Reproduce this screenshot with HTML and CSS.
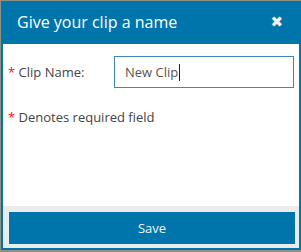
FILE: index.html
```html
<!DOCTYPE html>
<html>
<head>
<meta charset="utf-8">
<link rel="stylesheet" href="styles.css">
</head>
<body>
<div class="dialog">
  <div class="header">
    <span class="title">Give your clip a name</span>
    <span class="close">&#x2716;</span>
  </div>
  <div class="content">
    <div class="row">
      <label class="label"><span class="req">*</span> Clip Name:</label>
      <div class="input" role="textbox">New Clip<span class="caret"></span></div>
    </div>
    <div class="note"><span class="req">*</span> Denotes required field</div>
  </div>
  <div class="footer">
    <button class="save">Save</button>
  </div>
</div>
</body>
</html>
```
FILE: styles.css
```css
html, body {
  margin: 0;
  padding: 0;
}
body {
  background: #8f9085;
  width: 301px;
  height: 252px;
  overflow: hidden;
  font-family: "Open Sans", "Noto Sans", sans-serif;
}
.dialog {
  box-sizing: border-box;
  margin: 1px 0 0 1px;
  width: 300px;
  height: 249px;
  border: 2px solid #0075ab;
  display: flex;
  flex-direction: column;
  background: #fff;
}
.header {
  height: 41px;
  background: #0075ab;
  display: flex;
  align-items: center;
  justify-content: space-between;
  padding: 0 16px 0 14px;
  flex: none;
}
.title {
  color: #fff;
  font-size: 16px;
  line-height: 22px;
  margin-top: -3px;
}
.close {
  color: #f0f4f8;
  font-size: 15px;
  line-height: 16px;
  font-family: "DejaVu Sans", sans-serif;
  margin-top: -3px;
}
.content {
  flex: 1;
  padding: 12px 5px 0 5px;
  display: flex;
  flex-direction: column;
}
.row {
  display: flex;
  align-items: center;
  justify-content: space-between;
}
.label, .note {
  font-size: 13px;
  color: #444;
  line-height: 18px;
}
.req {
  color: #e5141e;
}
.input {
  box-sizing: border-box;
  width: 180px;
  height: 32px;
  border: 1px solid #3d86c2;
  font-size: 13px;
  color: #555;
  padding: 0 0 0 10px;
  display: flex;
  align-items: center;
}
.caret {
  display: inline-block;
  width: 1px;
  height: 17px;
  background: #222;
  margin-left: 1px;
}
.note {
  margin-top: 20px;
}
.footer {
  flex: none;
  height: 42px;
  box-sizing: border-box;
  background: #ececec;
  padding: 6px 4px 4px 6px;
  display: flex;
}
.save {
  flex: 1;
  border: none;
  background: #0075ab;
  color: #f2f6f9;
  font-family: "Open Sans", "Noto Sans", sans-serif;
  font-size: 13px;
  padding: 0;
  margin: 0;
}
```
